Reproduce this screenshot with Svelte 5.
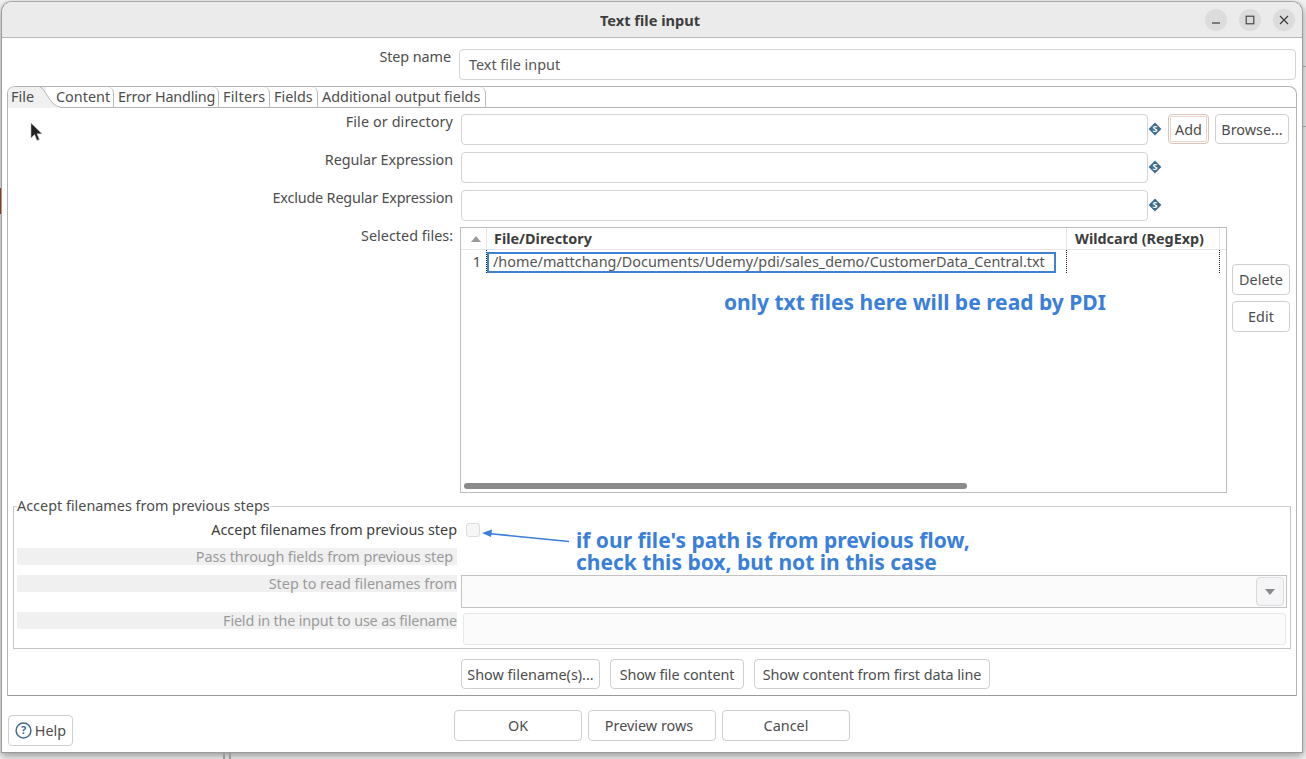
<script>
  const tabs = [
    { name: 'File', w: 38, cls: '' },
    { name: 'Content', w: 62, cls: '' },
    { name: 'Error Handling', w: 105, cls: 'narrow' },
    { name: 'Filters', w: 51, cls: 'wide' },
    { name: 'Fields', w: 48, cls: '' },
    { name: 'Additional output fields', w: 168, cls: '' }
  ];
  const fileRows = [
    { label: 'File or directory', add: true, cls: 'wide-s' },
    { label: 'Regular Expression', add: false, cls: 'narrow-s' },
    { label: 'Exclude Regular Expression', add: false, cls: 'narrow' }
  ];
</script>

{#snippet varIcon()}
  <svg class="var" width="14" height="14" viewBox="0 0 14 14" aria-hidden="true">
    <path d="M7 .6 13.4 7 7 13.4 .6 7Z" fill="#3f6d8f" />
    <text x="7" y="10" text-anchor="middle" class="var-s">S</text>
  </svg>
{/snippet}

<div class="desktop">
  <span class="bg-mark orange"></span>
  <span class="bg-mark line-c"></span>
  <span class="bg-mark line-d"></span>
  <span class="bg-mark foot-a"></span>
  <span class="bg-mark foot-b"></span>

  <div class="window">
    <header class="titlebar">
      <span class="title">Text file input</span>
      <div class="controls">
        <span class="ctl"><svg width="12" height="12" viewBox="0 0 12 12"><path d="M2 9h8" stroke="#3d3d3d" stroke-width="1.2" /></svg></span>
        <span class="ctl"><svg width="12" height="12" viewBox="0 0 12 12"><rect x="2.2" y="2.2" width="7.6" height="7.6" fill="none" stroke="#3d3d3d" stroke-width="1.1" /></svg></span>
        <span class="ctl"><svg width="12" height="12" viewBox="0 0 12 12"><path d="M2 2l8 8M10 2l-8 8" stroke="#3d3d3d" stroke-width="1.2" /></svg></span>
      </div>
    </header>

    <div class="stepname">
      <label class="step-label narrow-s" for="sn">Step name</label>
      <input id="sn" class="field step-input" value="Text file input" />
    </div>

    <section class="tabbox">
      <nav class="tabs">
        {#each tabs as t, i}
          <span class="tab {t.cls}" class:active={i === 0} style="width:{t.w}px">
            {t.name}
            {#if i === 0}
              <svg class="tab-curve" width="20" height="21" viewBox="0 0 20 21"><path d="M0 0C6 2 9 18 20 20V21H0Z" fill="#f0f0f0" /><path d="M0 0C6 2 9 18 20 20" fill="none" stroke="#b9b9b9" /></svg>
            {/if}
          </span>
        {/each}
      </nav>

      <div class="panel">
        <div class="file-rows">
          {#each fileRows as r}
            <div class="file-row">
              <span class="lbl {r.cls}">{r.label}</span>
              <span class="field big"></span>
              {@render varIcon()}
              {#if r.add}
                <div class="row-btns">
                  <button class="btn add">Add</button>
                  <button class="btn browse">Browse...</button>
                </div>
              {/if}
            </div>
          {/each}
        </div>

        <div class="selected">
          <span class="lbl sel-lbl">Selected files:</span>
          <div class="table">
            <div class="thead">
              <span class="th num"><svg width="10" height="6" viewBox="0 0 10 6"><path d="M5 0 10 6H0Z" fill="#9a9a9a" /></svg></span>
              <span class="th c1">File/Directory</span>
              <span class="th c2">Wildcard (RegExp)</span>
              <span class="th c3"></span>
            </div>
            <div class="trow">
              <span class="td num">1</span>
              <span class="td c1"><span class="cell-edit">/home/mattchang/Documents/Udemy/pdi/sales_demo/CustomerData_Central.txt</span></span>
              <span class="td c2"></span>
              <span class="td c3"></span>
            </div>
            <div class="scroll"><span class="thumb"></span></div>
          </div>
          <div class="side-btns">
            <button class="btn side">Delete</button>
            <button class="btn side">Edit</button>
          </div>
        </div>

        <fieldset class="group">
          <legend>Accept filenames from previous steps</legend>
          <div class="g-row first">
            <span class="g-lbl dark">Accept filenames from previous step</span>
            <span class="check"></span>
          </div>
          <div class="g-row second">
            <span class="g-lbl off pass">Pass through fields from previous step</span>
          </div>
          <div class="g-row third">
            <span class="g-lbl off">Step to read filenames from</span>
            <div class="combo"><span class="drop"><svg width="10" height="6" viewBox="0 0 10 6"><path d="M0 0H10L5 6Z" fill="#8a8a8a" /></svg></span></div>
          </div>
          <div class="g-row fourth">
            <span class="g-lbl off field-lbl">Field in the input to use as filename</span>
            <div class="dis-input"></div>
          </div>
        </fieldset>

        <div class="show-btns">
          <button class="btn s1">Show filename(s)...</button>
          <button class="btn s2">Show file content</button>
          <button class="btn s3">Show content from first data line</button>
        </div>
      </div>
    </section>

    <footer class="footer">
      <button class="btn help">
        <svg width="17" height="17" viewBox="0 0 17 17"><circle cx="8.5" cy="8.5" r="7.4" fill="none" stroke="#3f6d8f" stroke-width="1.5" /><text x="8.5" y="12.4" text-anchor="middle" class="q">?</text></svg>
        Help
      </button>
      <div class="main-btns">
        <button class="btn main">OK</button>
        <button class="btn main preview">Preview rows</button>
        <button class="btn main">Cancel</button>
      </div>
    </footer>

    <svg class="cursor" width="14" height="20" viewBox="0 0 14 20"><path d="M1 1V16L4.6 12.6 7 18.4 9.4 17.4 7 11.8H12Z" fill="#222" stroke="#bbb" stroke-width=".6" /></svg>
    <span class="note note-a">only txt files here will be read by PDI</span>
    <div class="note-b">
      <span class="note line">if our file's path is from previous flow,</span>
      <span class="note line">check this box, but not in this case</span>
    </div>
    <svg class="arrow" width="90" height="16" viewBox="0 0 90 16"><path d="M87 13.5 6 5.5" stroke="#3a7fd9" stroke-width="1.6" /><path d="M0 5 10 1.5 9 9Z" fill="#3a7fd9" /></svg>
  </div>
</div>

<style>
  :global(body) {
    margin: 0;
    background: #fff;
    font-family: "Noto Sans", "Open Sans", sans-serif;
    font-size: 14.4px;
    color: #4d4d4d;
  }
  .narrow { letter-spacing: -.18px; }
  .narrow-s { letter-spacing: -.08px; }
  .wide { letter-spacing: .2px; }
  .wide-s { letter-spacing: .1px; }
  .desktop {
    position: relative;
    width: 1306px;
    height: 759px;
    overflow: hidden;
    background: #f4f4f4;
  }
  .bg-mark { position: absolute; display: block; }
  .orange { left: 0; top: 188px; width: 2px; height: 26px; background: #b8451a; }
  .line-c { right: 0; top: 66px; width: 3px; height: 1px; background: #bbb; }
  .line-d { right: 0; top: 126px; width: 3px; height: 1px; background: #bbb; }
  .foot-a { left: 223px; bottom: 0; width: 2px; height: 7px; background: #999; z-index: 2; }
  .foot-b { left: 229px; bottom: 0; width: 2px; height: 7px; background: #999; z-index: 2; }

  .window {
    position: absolute;
    left: 1px;
    top: 1px;
    width: 1302px;
    height: 752px;
    box-sizing: border-box;
    border: 1px solid #9c9c9c;
    border-top-color: #a8a8a8;
    border-radius: 11px 11px 0 0;
    background: #fff;
    box-shadow: 0 3px 9px rgba(0,0,0,.4);
    display: flex;
    flex-direction: column;
  }
  .titlebar {
    flex: none;
    height: 36px;
    box-sizing: border-box;
    border-bottom: 1px solid #b9b9b9;
    border-radius: 10px 10px 0 0;
    background: #ebebeb;
    display: flex;
    align-items: center;
    justify-content: center;
    position: relative;
    padding-right: 4px;
  }
  .title { font-weight: 700; font-size: 14.6px; color: #3d3d3d; }
  .controls { position: absolute; right: 7px; top: 7px; display: flex; gap: 12px; }
  .ctl {
    width: 22px; height: 22px; border-radius: 50%; background: #dcdcdc;
    display: flex; align-items: center; justify-content: center;
  }
  .field {
    box-sizing: border-box;
    border: 1px solid #d3d3d3;
    border-radius: 4px;
    background: #fff;
    display: block;
    font: inherit;
    color: #555;
  }
  .stepname {
    flex: none;
    display: flex;
    height: 31px;
    margin-top: 11px;
  }
  .step-label { width: 449px; text-align: right; line-height: 16px; }
  .step-input {
    margin-left: 8px;
    width: 837px;
    height: 31px;
    padding: 0 9px;
    outline: none;
  }
  .tabbox {
    flex: none;
    margin: 6px 0 0 5px;
    width: 1290px;
    height: 610px;
    box-sizing: border-box;
    border: 1px solid #b4b4b4;
    border-radius: 8px 8px 0 0;
    display: flex;
    flex-direction: column;
    border-bottom-color: #999;
  }
  .tabs {
    flex: none;
    display: flex;
    height: 21px;
    box-sizing: border-box;
    border-bottom: 1px solid #b4b4b4;
  }
  .tab {
    box-sizing: border-box;
    height: 21px;
    line-height: 20px;
    padding-left: 4px;
    border-right: 1px solid #b9b9b9;
    border-radius: 0 6px 0 0;
    white-space: nowrap;
    position: relative;
    color: #4d4d4d;
    flex: none;
  }
  .tab.active {
    background: #f0f0f0;
    border-right: 0;
    border-radius: 6px 0 0 0;
    margin-right: 6px;
    padding-left: 3px;
  }
  .tab-curve { position: absolute; left: 32px; top: 0; }
  .panel {
    flex: 1;
    min-height: 0;
    padding-top: 6px;
    display: flex;
    flex-direction: column;
  }
  .file-rows { display: flex; flex-direction: column; gap: 7px; }
  .file-row {
    display: grid;
    grid-template-columns: 445px 687px 14px auto;
    column-gap: 8px;
    height: 31px;
    align-items: start;
  }
  .file-row :global(.var) { margin: 8px 0 0 -8px; }
  .lbl { text-align: right; line-height: 16px; white-space: nowrap; }
  .big { height: 31px; }
  .row-btns { display: flex; gap: 6px; margin-left: -10px; }
  .btn {
    box-sizing: border-box;
    border: 1px solid #cfcfcf;
    border-radius: 4px;
    background: #fff;
    font: inherit;
    color: #4d4d4d;
    padding: 0;
    display: inline-flex;
    align-items: center;
    justify-content: center;
    white-space: nowrap;
  }
  .add {
    width: 41px; height: 30px;
    border-color: #dcc4ba;
    box-shadow: inset 0 0 0 1px #fff, inset 0 0 0 2px #e8d6cd;
  }
  .browse { width: 74px; height: 30px; }
  .selected {
    display: grid;
    grid-template-columns: 445px 767px 58px;
    column-gap: 7px;
    margin-top: 6px;
    height: 266px;
  }
  .sel-lbl { padding-top: 1px; }
  .table {
    box-sizing: border-box;
    border: 1px solid #bdbdbd;
    height: 266px;
    position: relative;
    display: flex;
    flex-direction: column;
  }
  .thead { display: flex; height: 22px; box-sizing: border-box; border-bottom: 1px solid #e6e6e6; flex: none; }
  .th {
    box-sizing: border-box;
    font-weight: 700;
    line-height: 21px;
    color: #3d3d3d;
    border-right: 1px solid #e6e6e6;
    padding-left: 7px;
    white-space: nowrap;
  }
  .num { width: 26px; flex: none; }
  .c1 { width: 580px; flex: none; }
  .c2 { width: 153px; flex: none; }
  .c3 { flex: 1; border-right: 0; }
  .th.c2 { padding-left: 8px; }
  .th.num { padding: 0 0 0 10px; display: flex; align-items: center; }
  .trow { display: flex; height: 23px; flex: none; }
  .td { box-sizing: border-box; height: 23px; line-height: 23px; white-space: nowrap; }
  .td.num { text-align: right; padding-right: 5px; border-right: 1px dotted #222; }
  .td.c1 { border-right: 1px dotted #222; padding: 2px 0 0 0; }
  .td.c2 { border-right: 1px dotted #222; }
  .cell-edit {
    display: block;
    box-sizing: border-box;
    width: 569px;
    height: 21px;
    line-height: 16px;
    border: 2px solid #3d81cf;
    padding-left: 4px;
    color: #555;
  }
  .scroll { position: absolute; left: 3px; right: 4px; bottom: 3px; height: 6px; }
  .thumb { display: block; width: 503px; height: 6px; border-radius: 3px; background: #8a8a8a; }
  .side-btns { display: flex; flex-direction: column; gap: 6px; padding-top: 37px; margin-left: -2px; }
  .side { width: 58px; height: 31px; }
  .group {
    margin: 3px 0 0 5px;
    padding: 0;
    width: 1278px;
    height: 153px;
    box-sizing: border-box;
    border: 1px solid #c4c4c4;
    border-top-color: #d0d0d0;
    position: relative;
    min-width: 0;
  }
  .group legend { padding: 0; margin-left: 3px; line-height: 20px; height: 20px; }
  .g-row { display: flex; align-items: flex-start; position: relative; padding-left: 3px; }
  .g-lbl {
    box-sizing: border-box;
    width: 440px;
    height: 17px;
    line-height: 17px;
    text-align: right;
    white-space: nowrap;
    flex: none;
  }
  .g-lbl.off { background: #f0f0f0; color: #9a9a9a; }
  .g-lbl.dark { color: #3d3d3d; }
  .g-lbl.pass { padding-right: 4px; letter-spacing: -.08px; }
  .g-lbl.field-lbl { letter-spacing: -.17px; }
  .first { margin-top: 5px; height: 27px; }
  .second { height: 27px; }
  .third { height: 37px; }
  .fourth { height: 34px; }
  .check {
    width: 14px; height: 14px; box-sizing: border-box; margin: 2px 0 0 9px;
    border: 1px solid #dcdcdc; border-radius: 3px; background: #f6f6f6;
  }
  .combo {
    margin-left: 4px;
    width: 826px;
    height: 33px;
    box-sizing: border-box;
    border: 1px solid #c2c2c2;
    background: #fbfbfb;
    display: flex;
    justify-content: flex-end;
    padding: 1px 2px 1px 0;
  }
  .drop {
    width: 28px; height: 29px; box-sizing: border-box;
    border: 1px solid #dcdcdc; border-radius: 4px; background: #f5f5f7;
    display: flex; align-items: center; justify-content: center;
  }
  .dis-input {
    margin: 1px 0 0 6px;
    width: 823px;
    height: 32px;
    box-sizing: border-box;
    border: 1px solid #e8e8e8;
    border-radius: 3px;
    background: #fbfbfb;
  }
  .show-btns { display: flex; margin: 10px 0 0 453px; gap: 10px; }
  .show-btns .btn { height: 30px; }
  .s1 { width: 139px; }
  .s2 { width: 134px; letter-spacing: -.1px; }
  .s3 { width: 236px; letter-spacing: -.08px; }
  .footer { flex: 1; position: relative; }
  .main-btns { position: absolute; left: 452px; top: 14px; display: flex; gap: 6px; }
  .main { width: 128px; height: 31px; }
  .preview { padding-right: 6px; }
  .help { position: absolute; left: 6px; top: 19px; width: 65px; height: 31px; gap: 3px; }
  .q { font-size: 11px; font-weight: 700; fill: #3f6d8f; }
  .var-s { font-size: 9px; font-weight: 700; fill: #fff; }
  .cursor { position: absolute; left: 28px; top: 120px; }
  .note {
    font-weight: 700;
    font-size: 21px;
    line-height: 22px;
    color: #3a7fd9;
    white-space: nowrap;
  }
  .note-a { position: absolute; left: 722px; top: 289px; }
  .note-b { position: absolute; left: 574px; top: 527px; display: flex; flex-direction: column; }
  .line { display: block; height: 22px; }
  .arrow { position: absolute; left: 480px; top: 526px; }
</style>
